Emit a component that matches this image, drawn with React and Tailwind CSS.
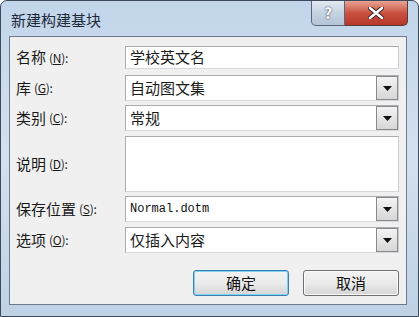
import React from "react";

const font = { fontFamily: '"Noto Sans CJK SC", "Noto Sans", sans-serif' };

function Key({ k }) {
  return (
    <span className="text-[12px] ml-[3px] tracking-tight">
      (<span className="underline">{k}</span>):
    </span>
  );
}

function Arrow() {
  return (
    <div className="w-[22px] h-full border border-[#8a8a8a] bg-gradient-to-b from-[#f4f4f4] to-[#d6d6d6] flex items-center justify-center">
      <svg width="9" height="5" viewBox="0 0 9 5">
        <path d="M0 0 H9 L4.5 5 Z" fill="#111" />
      </svg>
    </div>
  );
}

function Field({ label, k, h, mt, children, select, mono }) {
  return (
    <div className={`flex items-center ${mt}`}>
      <div className="w-[109px] text-[15px] text-[#1a1a1a] flex items-center">
        {label}
        <Key k={k} />
      </div>
      <div
        className={`flex-1 ${h} bg-white border border-[#a9acb1] border-r-[#c9cdd2] border-b-[#d5d9de] flex items-center`}
      >
        <div
          className={`flex-1 pl-[4px] ${mono ? "text-[12px] text-[#111]" : "text-[15px] text-[#1a1a1a]"}`}
          style={mono ? { fontFamily: '"Liberation Mono", monospace' } : undefined}
        >
          {children}
        </div>
        {select && <Arrow />}
      </div>
    </div>
  );
}

export default function App() {
  return (
    <div className="w-[419px] h-[317px] bg-white" style={font}>
      <div className="w-[419px] h-[317px] flex flex-col rounded-t-[7px] border border-[#3d4a5c] bg-gradient-to-b from-[#c2d5ea] via-[#d3e1ef] to-[#bed1e6] overflow-hidden">
        <div className="h-[35px] flex items-start">
          <div className="pl-[10px] pt-[8px] text-[15px] text-[#1d2a3a] flex-1">
            新建构建基块
          </div>
          <div className="flex h-[25px]">
            <div className="w-[34px] h-[25px] rounded-bl-[5px] border border-t-0 border-[#5a6678] bg-gradient-to-b from-[#e3ebf3] via-[#c5d3e2] to-[#b5c5d8] flex items-center justify-center text-white font-bold text-[15px] [text-shadow:0_0_2px_#223]">
              ?
            </div>
            <div className="w-[63px] h-[25px] rounded-br-[5px] border border-t-0 border-l-0 border-[#5a3a38] bg-gradient-to-b from-[#e6a394] via-[#c9503f] to-[#b7382a] flex items-center justify-center">
              <svg width="16" height="12" viewBox="0 0 16 12">
                <path d="M2 1 L14 11 M14 1 L2 11" stroke="#3a2020" strokeWidth="4.5" strokeLinecap="round" />
                <path d="M2 1 L14 11 M14 1 L2 11" stroke="#fff" strokeWidth="2.6" strokeLinecap="round" />
              </svg>
            </div>
          </div>
          <div className="w-[10px]" />
        </div>
        <div className="flex-1 flex px-[8px] pb-[11px] pl-[8px] pr-[11px]">
          <div className="flex-1 flex flex-col bg-[#f0f0f0] border border-[#6c7a8c] pt-[9px] pl-[6px] pr-[7px]">
            <Field label="名称" k="N" h="h-[23px]" mt="mt-0">学校英文名</Field>
            <Field label="库" k="G" h="h-[26px]" mt="mt-[6px]" select>自动图文集</Field>
            <Field label="类别" k="C" h="h-[26px]" mt="mt-[4px]" select>常规</Field>
            <Field label="说明" k="D" h="h-[56px]" mt="mt-[5px]"></Field>
            <Field label="保存位置" k="S" h="h-[26px]" mt="mt-[4px]" select mono>Normal.dotm</Field>
            <Field label="选项" k="O" h="h-[26px]" mt="mt-[5px]" select>仅插入内容</Field>
            <div className="flex justify-end mt-[17px] gap-[14px]">
              <button className="w-[96px] h-[26px] rounded-[3px] border border-[#3c7fb1] shadow-[inset_0_0_0_1px_#7fd0f5] bg-gradient-to-b from-[#f2f2f2] via-[#ebebeb] to-[#d5d5d5] text-[15px] text-[#111]">
                确定
              </button>
              <button className="w-[96px] h-[26px] rounded-[3px] border border-[#707070] shadow-[inset_0_0_0_1px_#fafafa] bg-gradient-to-b from-[#f2f2f2] via-[#ebebeb] to-[#d5d5d5] text-[15px] text-[#111]">
                取消
              </button>
            </div>
          </div>
        </div>
      </div>
    </div>
  );
}
